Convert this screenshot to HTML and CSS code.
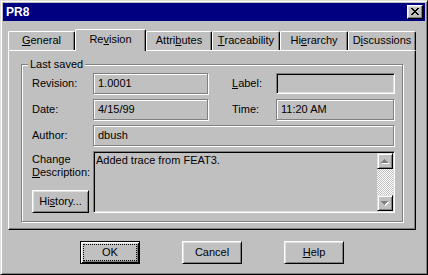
FILE: index.html
```html
<!DOCTYPE html>
<html lang="en">
<head>
  <meta charset="UTF-8" />
  <title>PR8</title>
  <link rel="stylesheet" href="styles.css">
</head>
<body>
  <div class="window">
    <div class="titlebar">
      <span class="title">PR8</span>
      <button class="close" aria-label="Close">
        <svg width="8" height="7" viewBox="0 0 8 7" shape-rendering="crispEdges">
          <path fill="#000" d="M0 0h2v1H0z M6 0h2v1H6z M1 1h2v1H1z M5 1h2v1H5z M2 2h4v1H2z M3 3h2v1H3z M2 4h4v1H2z M1 5h2v1H1z M5 5h2v1H5z M0 6h2v1H0z M6 6h2v1H6z"/>
        </svg>
      </button>
    </div>

    <div class="tabs">
      <div class="tab t-general"><u>G</u>eneral</div>
      <div class="tab t-revision active">Re<u>v</u>ision</div>
      <div class="tab t-attr">Attri<u>b</u>utes</div>
      <div class="tab t-trace"><u>T</u>raceability</div>
      <div class="tab t-hier">Hi<u>e</u>rarchy</div>
      <div class="tab t-disc">D<u>i</u>scussions</div>
    </div>

    <div class="panel">
      <div class="group">
        <span class="legend">Last saved</span>

        <div class="row">
          <span class="lbl">Revision:</span>
          <div class="field static w-short">1.0001</div>
          <span class="lbl lbl-right"><u>L</u>abel:</span>
          <div class="field sunken w-label"></div>
        </div>

        <div class="row">
          <span class="lbl">Date:</span>
          <div class="field static w-short">4/15/99</div>
          <span class="lbl lbl-right">Time:</span>
          <div class="field static w-time">11:20 AM</div>
        </div>

        <div class="row">
          <span class="lbl">Author:</span>
          <div class="field static w-long">dbush</div>
        </div>

        <div class="row desc-row">
          <div class="desc-labels">
            <div class="desc-text">Change<br><u>D</u>escription:</div>
            <button class="btn history">Hi<u>s</u>tory...</button>
          </div>
          <div class="desc-box">
            <div class="desc-content">Added trace from FEAT3.</div>
            <div class="scrollbar">
              <div class="sb-btn">
                <svg width="8" height="5" viewBox="0 0 8 5" shape-rendering="crispEdges">
                  <path fill="#fff" d="M4 1h1v1h1v1h1v1h1v1H1v-1h1v-1h1v-1h1z"/>
                  <path fill="#808080" d="M3 0h1v1h1v1h1v1h1v1H0v-1h1v-1h1v-1h1z"/>
                </svg>
              </div>
              <div class="sb-track"></div>
              <div class="sb-btn">
                <svg width="8" height="5" viewBox="0 0 8 5" shape-rendering="crispEdges">
                  <path fill="#fff" d="M1 1h7v1H7v1H6v1H5v1H4v-1H3v-1H2v-1H1z"/>
                  <path fill="#808080" d="M0 0h7v1H6v1H5v1H4v1H3v-1H2v-1H1v-1H0z"/>
                </svg>
              </div>
            </div>
          </div>
        </div>
      </div>
    </div>

    <div class="buttons">
      <button class="btn default"><span class="focus">OK</span></button>
      <button class="btn">Cancel</button>
      <button class="btn"><u>H</u>elp</button>
    </div>
  </div>
</body>
</html>
```

FILE: styles.css
```css
html, body {
  margin: 0;
  padding: 0;
  background: #c0c0c0;
}
body {
  font: 11px/13px "Liberation Sans", Arial, sans-serif;
  color: #000;
}
u {
  text-decoration: underline;
  text-underline-offset: 1px;
}
.window {
  width: 428px;
  height: 275px;
  box-sizing: border-box;
  padding: 2px;
  border: 1px solid;
  border-color: #dfdfdf #000 #000 #dfdfdf;
  box-shadow: inset 1px 1px #fff, inset -1px -1px #808080;
  background: #c0c0c0;
}
.titlebar {
  height: 18px;
  background: #000080;
  color: #fff;
  display: flex;
  align-items: center;
  justify-content: space-between;
  padding: 0 2px 0 3px;
}
.title {
  font-weight: bold;
  font-size: 12px;
}
.close {
  width: 16px;
  height: 14px;
  box-sizing: border-box;
  padding: 0;
  margin: 0;
  background: #c0c0c0;
  border: 1px solid;
  border-color: #fff #000 #000 #fff;
  box-shadow: inset -1px -1px #808080, inset 1px 1px #dfdfdf;
  display: flex;
  align-items: center;
  justify-content: center;
}
.close svg {
  display: block;
  margin: 0 0 1px 0;
}

/* tabs */
.tabs {
  display: flex;
  align-items: flex-end;
  height: 21px;
  margin: 8px 0 0 5px;
  position: relative;
  z-index: 1;
}
.tab {
  height: 19px;
  box-sizing: border-box;
  border-top: 1px solid #fff;
  border-left: 1px solid #fff;
  border-right: 1px solid #000;
  border-radius: 2px 2px 0 0;
  box-shadow: inset -1px 0 #808080;
  background: #c0c0c0;
  display: flex;
  align-items: center;
  justify-content: center;
  padding-bottom: 1px;
}
.tab.active {
  height: 22px;
  margin-bottom: -1px;
  padding-bottom: 3px;
}
.t-general { width: 67px; }
.t-revision { width: 71px; }
.t-attr { width: 66px; }
.t-trace { width: 68px; }
.t-hier { width: 68px; }
.t-disc { width: 68px; }

.panel {
  width: 408px;
  height: 180px;
  box-sizing: border-box;
  margin-left: 5px;
  border-top: 1px solid #fff;
  border-left: 1px solid #fff;
  border-right: 1px solid #000;
  border-bottom: 1px solid #000;
  box-shadow: inset -1px -1px #808080;
  padding: 13px 0 0 12px;
}
.group {
  position: relative;
  width: 382px;
  height: 158px;
  box-sizing: border-box;
  border: 1px solid #808080;
  box-shadow: inset 1px 1px #fff, 1px 1px #fff;
  padding: 8px 0 0 10px;
}
.legend {
  position: absolute;
  top: -7px;
  left: 6px;
  padding: 0 2px;
  background: #c0c0c0;
}
.row {
  display: flex;
  align-items: center;
  height: 21px;
  margin-bottom: 5px;
}
.lbl {
  width: 61px;
  flex: none;
}
.lbl-right {
  width: 44px;
  margin-left: 24px;
}
.field {
  height: 21px;
  box-sizing: border-box;
  display: flex;
  align-items: center;
  flex: none;
}
.static {
  border: 1px solid #808080;
  box-shadow: inset 1px 1px #fff, 1px 1px #fff;
  padding-left: 4px;
}
.sunken {
  border: 1px solid;
  border-color: #808080 #fff #fff #808080;
  box-shadow: inset 1px 1px #000, inset -1px -1px #dfdfdf;
}
.w-short { width: 115px; }
.w-label { width: 119px; }
.w-time { width: 118px; }
.w-long { width: 301px; }

.desc-row {
  height: 62px;
  margin-top: 2px;
  align-items: stretch;
}
.desc-labels {
  width: 61px;
  display: flex;
  flex-direction: column;
  justify-content: space-between;
  flex: none;
}
.desc-text {
  padding-top: 2px;
}
.desc-box {
  width: 302px;
  box-sizing: border-box;
  border: 1px solid;
  border-color: #808080 #fff #fff #808080;
  box-shadow: inset 1px 1px #000, inset -1px -1px #dfdfdf;
  padding: 1px;
  display: flex;
}
.desc-content {
  flex: 1;
  padding: 1px 1px;
}
.scrollbar {
  width: 16px;
  display: flex;
  flex-direction: column;
}
.sb-btn {
  height: 16px;
  box-sizing: border-box;
  border: 1px solid;
  border-color: #dfdfdf #000 #000 #dfdfdf;
  box-shadow: inset 1px 1px #fff, inset -1px -1px #808080;
  display: flex;
  align-items: center;
  justify-content: center;
}
.sb-track {
  flex: 1;
  background-image: conic-gradient(#fff 25%, #c0c0c0 0 50%, #fff 0 75%, #c0c0c0 0);
  background-size: 2px 2px;
}

/* buttons */
.btn {
  width: 60px;
  height: 23px;
  box-sizing: border-box;
  padding: 0;
  margin: 0;
  font: inherit;
  color: #000;
  background: #c0c0c0;
  border: 1px solid;
  border-color: #fff #000 #000 #fff;
  box-shadow: inset 1px 1px #dfdfdf, inset -1px -1px #808080;
}
.history {
  width: 57px;
}
.btn.default {
  border: 1px solid #000;
  box-shadow: inset 1px 1px #fff, inset -1px -1px #000, inset 2px 2px #dfdfdf, inset -2px -2px #808080;
  padding: 2px;
}
.focus {
  display: flex;
  align-items: center;
  justify-content: center;
  height: 100%;
  box-sizing: border-box;
  border: 1px dotted #000;
}
.buttons {
  display: flex;
  gap: 42px;
  margin-top: 11px;
  padding-left: 77px;
}
```
